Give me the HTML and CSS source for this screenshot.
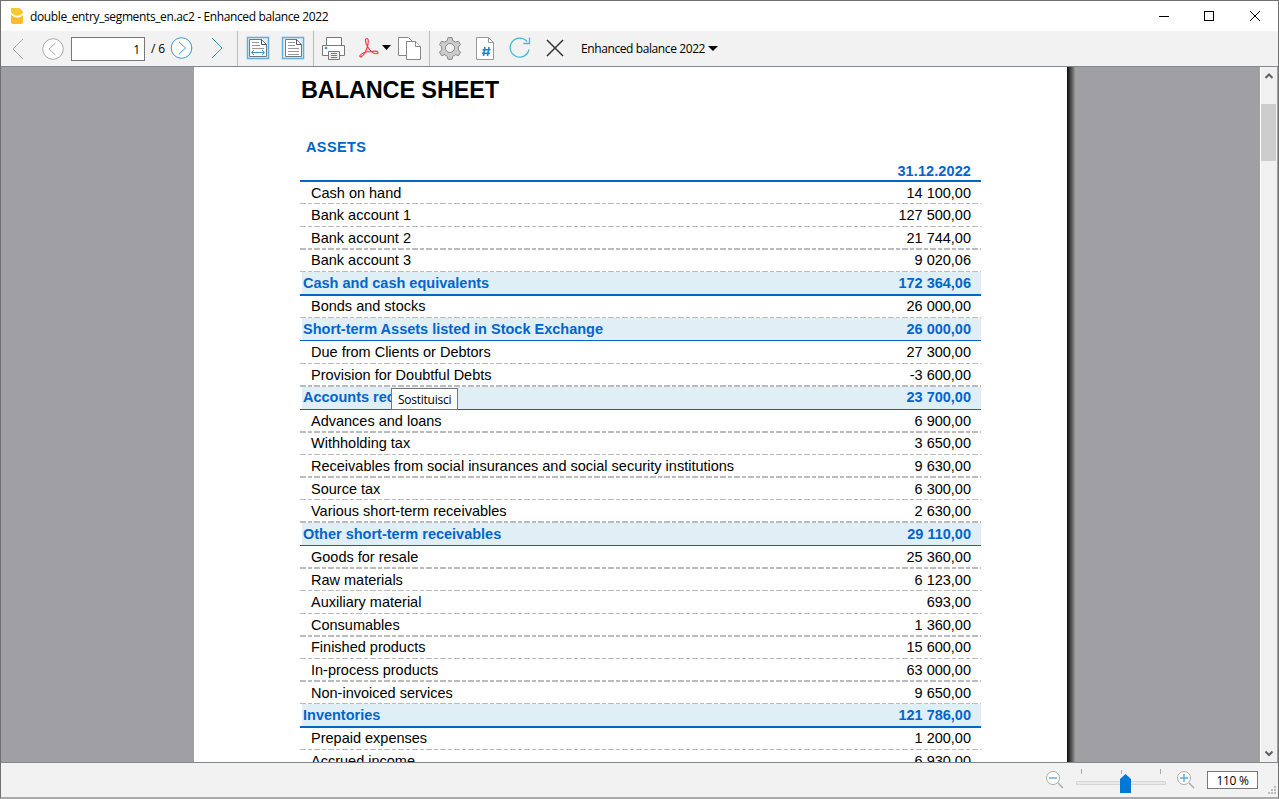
FILE: index.html
```html
<!DOCTYPE html>
<html lang="en"><head><meta charset="utf-8"><title>Enhanced balance 2022</title><link rel="stylesheet" href="styles.css"></head>
<body>
<div class="window">
<header class="titlebar">
<svg class="logo" width="14" height="18" viewBox="0 0 14 18"><path d="M1 1h8.500L13 4.500v1C10 10 4 10 1 5z" fill="#fdc62e"/><path d="M1 7.500c3 4 9 4 12 .500V15q0 2-2 2H3q-2 0-2-2z" fill="#fcbc2d"/></svg>
<span class="title ui">double_entry_segments_en.ac2 - Enhanced balance 2022</span>
<svg class="controls" width="110" height="20" viewBox="1155 5 110 20" fill="none" stroke="#000" shape-rendering="crispEdges"><path d="M1159 15.500h10M1204.500 10.500h9v9h-9z"/><path d="M1250 10l10 10M1260 10l-10 10" shape-rendering="auto"/></svg>
</header>
<nav class="toolbar">
<svg class="nav-left" width="70" height="34" viewBox="0 31 70 34" fill="none" stroke="#aaa"><path d="M23 38L13 48l10 10"/><circle cx="53" cy="48" r="10.300" fill="#fff"/><path d="M55.500 42l-6.500 6 6.500 6"/></svg>
<span class="page-box ui">1</span><span class="page-total ui">/ 6</span>
<svg class="nav-right" width="402" height="35" viewBox="170 31 402 35" fill="none">
<g stroke="#3697d3"><circle cx="181.500" cy="48" r="10.300" fill="#fff"/><path d="M179 42l6.500 6-6.500 6M212 38l10 10-10 10"/></g>
<path d="M237.500 31v35M313.500 31v35M429.500 31v35" stroke="#bbb"/>
<g><path d="M247.500 37.500h21v21h-21zM282.500 37.500h21v21h-21z" fill="#e4f1fa" stroke="#62afdf" stroke-width="1.500"/><path d="M249.500 39.500h12l5 5v12h-17zM285.500 39.500h11l5 5v12h-16z" fill="#fff" stroke="#777"/><path d="M261.500 39.500v5h5M296.500 39.500v5h5" stroke="#555"/><path d="M252 42.500h7M252 45.500h8M252 48.500h12M288 42.500h7M288 45.500h7M288 48.500h11M288 51.500h11M288 54.500h11" stroke="#999"/><path d="M252 52.500h12M254 50l-2.500 2.500L254 55M262 50l2.500 2.500L262 55" stroke="#3697d3"/></g>
<g stroke="#777"><path d="M326.500 45.500v-8h15v8M322.500 45.500h22v10h-22z" fill="#fff"/><path d="M328.500 51.500h11v8h-11z" fill="#eee"/><path d="M331 53.500h6M331 55.500h6M331 57.500h6"/></g><circle cx="326" cy="48" r="1.300" fill="#3697d3"/>
<g stroke="#ed3b42" stroke-width="1.200"><path d="M367 38.500c-2.500 0-1.500 5 .500 8 3 5 7 8 10 7 2-2-2-3-6-2-6 0-10 2-11.500 4-1 3 3 1 5-3 3-5 4.500-14 2-14z"/></g><path d="M382 45h9l-4.500 5z" fill="#000"/>
<g fill="#fff" stroke="#888"><path d="M398.500 37.500h10l4 4v14h-14z"/><path d="M406.500 41.500h9l5 5v13h-14z"/><path d="M415.500 41.500v5h5"/></g>
<g stroke="#888" fill="#ccc"><path d="M448 37.500h4l.700 3 2.800 1.600 3-.900 2 3.500-2.200 2.200v3l2.200 2.200-2 3.500-3-.900-2.800 1.600-.700 3h-4l-.700-3-2.800-1.600-3 .900-2-3.500 2.200-2.200v-3l-2.200-2.200 2-3.500 3 .900 2.800-1.600z"/><circle cx="450" cy="48" r="4.500" fill="#f2f2f2"/></g>
<path d="M476.500 37.500h12l5 5v17h-17z" fill="#fff" stroke="#999"/><path d="M488.500 37.500v5h5" stroke="#999"/><path d="M485 47l-1.500 9M489 47l-1.500 9M482.500 49.800h8M482 53.300h8" stroke="#2582c3" stroke-width="1.600"/>
<path d="M527 41.500a9.500 9.500 0 1 0 2 8M529.500 37.500v6h-6" stroke="#45bad3" stroke-width="1.300"/><path d="M547 40l16 16M563 40l-16 16" stroke="#333" stroke-width="1.500"/>
</svg>
<span class="report ui">Enhanced balance 2022</span><i class="caret"></i>
</nav>
<main class="viewport">
<div class="page">
<h1><span>BALANCE SHEET</span></h1><h2>ASSETS</h2>
<div class="sheet" id="sheet"><div class="row date"><span></span><b>31.12.2022</b></div></div>
</div>
<div class="page-shadow"></div>
<svg class="scroll" width="17" height="695" viewBox="0 0 17 695"><path fill="#f0f0f0" d="M1 0h16v695H1z"/><path fill="#fff" d="M0 0h1v695H0z"/><path fill="#cdcdcd" d="M1 37h15v57H1z"/><path d="M5.500 11l3.500-3.500 3.500 3.500M5.500 684.500L9 688l3.500-3.500" fill="none" stroke="#606060" stroke-width="2"/></svg>
<div class="tooltip ui">Sostituisci</div>
</main>
<footer class="status">
<svg width="160" height="34" viewBox="1040 763 160 34" fill="none"><g stroke="#aaa"><circle cx="1053" cy="778" r="6.500" fill="#fff"/><circle cx="1184" cy="778" r="6.500" fill="#fff"/><path d="M1058 783l5 5M1189 783l5 5" stroke-width="1.400"/></g><path d="M1049 778h8M1180 778h8M1184 774v8" stroke="#62aee0" stroke-width="1.500"/><path d="M1076.500 781.500h89v3h-89z" fill="#e7eaea" stroke="#d6d6d6"/><path d="M1081.500 769v5M1121.500 770v4M1160.500 769v5" stroke="#aaa"/><path d="M1120 793v-14l5.500-5 5.500 5v14z" fill="#0078d7"/></svg>
<span class="zoom-box ui">110 %</span>
<svg class="grip" width="10" height="10" viewBox="0 0 10 10"><path d="M6 0h2v2H6zM3 3h2v2H3zM6 3h2v2H6zM0 6h2v2H0zM3 6h2v2H3zM6 6h2v2H6z" fill="#bbb"/></svg>
</footer>
</div>
<script src="app.js"></script>
</body></html>
```
FILE: styles.css
```css
*{box-sizing:border-box}
body{margin:0;overflow:hidden;font-family:"Liberation Sans",Arial,sans-serif}
.window{width:1279px;height:799px;display:flex;flex-direction:column;border:1px solid #707070;border-bottom:2px solid #aaa;background:#f2f2f2}
svg{display:block;flex:none}
.ui{font-family:"Open Sans","Noto Sans",sans-serif;font-size:12px;color:#000;white-space:nowrap}
.titlebar{height:30px;flex:none;background:#fff;display:flex;align-items:center}
.logo{margin-left:9px}
.title{margin-left:6px;letter-spacing:-.37px}
.controls{margin-left:auto;margin-right:13px}
.toolbar{height:36px;flex:none;border-bottom:1px solid #828790;display:flex;align-items:center}
.nav-left{margin-left:-1px}
.page-box{width:74px;height:24px;border:1px solid #777;background:#fff;text-align:right;padding:3px 4px;line-height:17px;margin-left:1px}
.page-total{width:25px;padding-left:6px;letter-spacing:-.1px}
.report{margin-left:9px;letter-spacing:-.4px}
.caret{border:5px solid transparent;border-top-color:#000;border-bottom:0;margin-left:3px}
.viewport{height:695px;flex:none;background:#a09fa4;position:relative;display:flex;overflow:hidden}
.page{width:873px;flex:none;margin-left:193px;background:#fff;padding-left:106px;overflow:hidden;height:695px}
.page-shadow{width:8px;background:linear-gradient(90deg,#080808,#333 30%,#777 80%,#99989d)}
.scroll{margin-left:auto;margin-right:1px}
h1{font-size:23.5px;line-height:28px;height:61px;margin:9px 0 0 1px;letter-spacing:-.13px}
h2{font-size:14.5px;line-height:20px;height:23px;margin:0 0 0 6px;color:#06c;letter-spacing:.4px}
.sheet{width:681px}
.row{display:flex;justify-content:space-between;font-size:14.5px;padding:0 10px 0 11px;white-space:nowrap;position:relative}
.row>*{line-height:22px}
.row.tight>*{line-height:20px}
.date{height:22px;border-bottom:2px solid #06c;color:#06c;letter-spacing:.1px}
.line1,.line2{background:repeating-linear-gradient(90deg,#bbb 0 6px,transparent 6px 8px,#bbb 8px 12px,transparent 12px 14px) bottom/100% 1px no-repeat}
.line2{background-size:100% 2px}
.total{padding-left:3px;background:linear-gradient(#e0eef6,#e0eef6) 2px 0 no-repeat;color:#06c;font-weight:bold;border-bottom:1px solid #06c}
.total.thick{border-bottom-width:2px}
.tooltip{position:absolute;left:390px;top:321px;width:67px;height:22px;border:1px solid #777;background:#fff;padding:2px 6px;line-height:17px;letter-spacing:-.25px}
.status{height:34px;flex:none;border-top:1px solid #828790;display:flex;align-items:center;justify-content:flex-end}
.zoom-box{width:51px;height:18px;border:1px solid #777;background:#fff;text-align:center;line-height:17px;letter-spacing:-.3px;margin:0 10px 0 7px}
.grip{align-self:flex-end}
```
FILE: app.js
```js
/* name, amount, bottom edge, line weight, subtotal */
const rows=[["Cash on hand","14 100,00",204,1],["Bank account 1","127 500,00",227,1],["Bank account 2","21 744,00",250,2],["Bank account 3","9 020,06",272,1],["Cash and cash equivalents","172 364,06",296,2,1],["Bonds and stocks","26 000,00",318,1],["Short-term Assets listed in Stock Exchange","26 000,00",341,1,1],["Due from Clients or Debtors","27 300,00",364,1],["Provision for Doubtful Debts","-3 600,00",387,2],["Accounts receivable","23 700,00",410,1,1],["Advances and loans","6 900,00",433,2],["Withholding tax","3 650,00",455,1],["Receivables from social insurances and social security institutions","9 630,00",478,2],["Source tax","6 300,00",500,1],["Various short-term receivables","2 630,00",523,2],["Other short-term receivables","29 110,00",546,1,1],["Goods for resale","25 360,00",569,2],["Raw materials","6 123,00",591,1],["Auxiliary material","693,00",614,1],["Consumables","1 360,00",637,2],["Finished products","15 600,00",659,1],["In-process products","63 000,00",682,2],["Non-invoiced services","9 650,00",704,1],["Inventories","121 786,00",728,2,1],["Prepaid expenses","1 200,00",750,1],["Accrued income","6 930,00",773,1]];
const tight=new Set(["Bank account 3","Bonds and stocks","Accounts receivable","Withholding tax","Finished products","Prepaid expenses"]);
let previous=182;
for(const [name,amount,bottom,weight,total] of rows){
 const row=document.createElement('div');
 row.className='row '+(total?'total '+(weight===2?'thick':''):'line'+weight)+(tight.has(name)?' tight':'');
 row.style.height=(bottom-previous)+'px';
 row.innerHTML=`<span>${name}</span><span>${amount}</span>`;
 document.getElementById('sheet').append(row);previous=bottom;
}
```
